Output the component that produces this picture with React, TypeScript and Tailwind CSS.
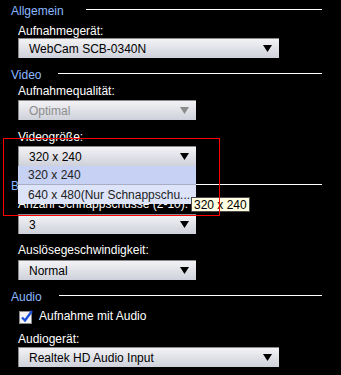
import React from "react";

function Header({ text, gap }: { text: string; gap: string }) {
  return (
    <div className="flex items-start pl-[11px] pr-[19px] h-[14px]">
      <span className="text-[#8ab8ff] whitespace-nowrap">{text}</span>
      <div className={`flex-1 h-px bg-white mt-[5px] ${gap}`} />
    </div>
  );
}

function Arrow({ disabled }: { disabled?: boolean }) {
  return (
    <svg width="9" height="7" viewBox="0 0 9 7" className="shrink-0">
      <polygon points="0,0 9,0 4.5,7" fill={disabled ? "#8c8c8c" : "#000"} />
    </svg>
  );
}

function Combo({ text, wide, disabled }: { text: string; wide?: boolean; disabled?: boolean }) {
  return (
    <div
      className={`ml-[18px] h-[20px] flex items-center justify-between border-t border-l border-[#8a8a8a] bg-gradient-to-b from-[#f3f3f6] to-[#cfd1da] pl-[10px] pr-[7px] ${
        wide ? "w-[261px]" : "w-[178px]"
      } ${disabled ? "text-[#8c8c8c]" : "text-black"}`}
    >
      <span className="whitespace-nowrap">{text}</span>
      <Arrow disabled={disabled} />
    </div>
  );
}

function Label({ text, className = "" }: { text: string; className?: string }) {
  return <div className={`pl-[18px] text-white h-[14px] whitespace-nowrap ${className}`}>{text}</div>;
}

export default function App() {
  return (
    <div className="relative w-[341px] h-[375px] bg-black overflow-hidden font-['Liberation_Sans',Arial,sans-serif] text-[12px] leading-[14px]">
      <div className="flex flex-col pt-[4px]">
        <Header text="Allgemein" gap="ml-[22px]" />
        <Label text="Aufnahmegerät:" className="mt-[6px]" />
        <Combo text="WebCam SCB-0340N" wide />
        <div className="mt-[10px]">
          <Header text="Video" gap="ml-[17px]" />
        </div>
        <Label text="Aufnahmequalität:" className="mt-[2px]" />
        <div className="mt-[2px]">
          <Combo text="Optimal" disabled />
        </div>
        <Label text="Videogröße:" className="mt-[10px]" />
        <div className="mt-[2px]">
          <Combo text="320 x 240" />
        </div>
        <div className="mt-[13px]">
          <Header text="Burst-Modus" gap="ml-[17px]" />
        </div>
        <Label text="Anzahl Schnappschüsse (2-10):" className="mt-[4px]" />
        <div className="mt-[3px]">
          <Combo text="3" />
        </div>
        <Label text="Auslösegeschwindigkeit:" className="mt-[9px]" />
        <div className="mt-[3px]">
          <Combo text="Normal" />
        </div>
        <div className="mt-[10px]">
          <Header text="Audio" gap="ml-[17px]" />
        </div>
        <div className="mt-[4px] h-[16px] flex items-center pl-[19px] text-white">
          <svg width="15" height="15" viewBox="0 0 15 15" className="shrink-0">
            <rect x="0.5" y="2.5" width="12" height="12" fill="#f4f4f6" stroke="#8a8a8a" />
            <path d="M3 8.5 L6 11.5 L13 2" fill="none" stroke="#1c4fd8" strokeWidth="2.4" />
          </svg>
          <span className="ml-[5px] whitespace-nowrap">Aufnahme mit Audio</span>
        </div>
        <Label text="Audiogerät:" className="mt-[8px]" />
        <div className="mt-[1px]">
          <Combo text="Realtek HD Audio Input" wide />
        </div>
      </div>

      {/* dropdown popup */}
      <div className="absolute left-[18px] top-[166px] w-[178px] flex flex-col text-[#222]">
        <div className="h-[19px] bg-[#c7d1f4] pl-[10px] flex items-center border-b border-[#a9aec4]">320 x 240</div>
        <div className="h-[19px] bg-[#dde4fa] pl-[10px] flex items-center whitespace-nowrap overflow-hidden">
          640 x 480(Nur Schnappschu...
        </div>
      </div>

      {/* tooltip */}
      <div className="absolute left-[191px] top-[197px] h-[15px] px-[2px] flex items-center bg-[#ffffe1] border border-[#4a4a4a] text-black whitespace-nowrap">
        320 x 240
      </div>

      {/* red highlight */}
      <div className="absolute left-[3px] top-[138px] w-[217px] h-[78px] border border-[#ff0000]" />
    </div>
  );
}
